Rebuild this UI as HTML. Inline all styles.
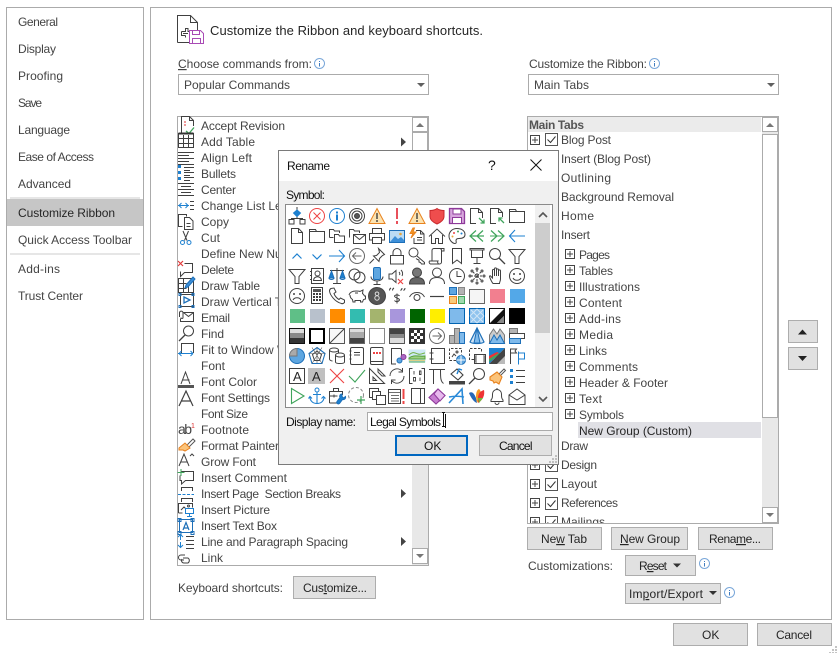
<!DOCTYPE html>
<html><head><meta charset="utf-8"><title>Rename</title>
<style>
html,body{margin:0;padding:0;background:#fff;width:838px;height:653px;overflow:hidden}
svg{display:block}
text{font-family:"Liberation Sans",sans-serif;font-size:12px;fill:#444;letter-spacing:0}
.d{fill:#262626}
.k{fill:#111}
.b{fill:#e1e1e1;stroke:#adadad}
.i{fill:none;stroke:#404040}
.u{text-decoration:underline}
</style></head><body>
<svg width="838" height="653" viewBox="0 0 838 653" xmlns="http://www.w3.org/2000/svg">
<defs>
<g id="pb"><rect x=".5" y=".5" width="9" height="9" fill="#fff" stroke="#444"/><path d="M2 5h6M5 2v6" stroke="#444" fill="none"/></g>
<g id="cb"><rect x=".5" y=".5" width="12" height="12" fill="#fff" stroke="#555"/><path d="M2.500 6.500l3 3 5-6" stroke="#333" fill="none"/></g>
<g id="inf"><circle cx="5.500" cy="5.500" r="5" fill="#fff" stroke="#7aa7d9"/><path d="M5.500 3v1M5.500 5v3.500" stroke="#3f7cc0"/></g>
</defs>
<rect width="838" height="653" fill="#fff"/>

<!-- left nav -->
<rect x="6.500" y="7.500" width="137" height="612" fill="#fff" stroke="#ababab"/>
<rect x="10" y="197" width="130" height="2" fill="#e6e6e6"/>
<rect x="7" y="199" width="136" height="27" fill="#c6c6c6"/>
<rect x="10" y="253" width="130" height="2" fill="#e6e6e6"/>
<text x="18" y="26" textLength="40">General</text>
<text x="18" y="53" textLength="38">Display</text>
<text x="18" y="80" textLength="45">Proofing</text>
<text x="18" y="107" textLength="24">Save</text>
<text x="18" y="134" textLength="52">Language</text>
<text x="18" y="161" textLength="76">Ease of Access</text>
<text x="18" y="188" textLength="53">Advanced</text>
<text x="18" y="217" class="d" textLength="97">Customize Ribbon</text>
<text x="18" y="244" textLength="114">Quick Access Toolbar</text>
<text x="18" y="273" textLength="42">Add-ins</text>
<text x="18" y="300" textLength="65">Trust Center</text>

<!-- main panel -->
<rect x="150.500" y="7.500" width="681" height="612" fill="#fff" stroke="#ababab"/>
<g fill="none" stroke="#404040">
<path d="M177.500 42.500V15.500H190.500L197.500 22.500V30M190.500 15.500V22.500H197.500M177.500 42.500H189"/>
<path d="M181.500 31.500h4v-3h3M181.500 31.500v4h4M183 33.500h5M188 28.500v3h2M185.500 35.500v2"/>
</g>
<path d="M189.500 30.500h11l3 3v10h-14zM192.500 30.500v4h7v-4M192.500 43.500v-5h8v5" fill="#fff" stroke="#a94bb5"/>
<text x="210" y="35" style="font-size:13px" class="d" textLength="273">Customize the Ribbon and keyboard shortcuts.</text>

<text x="178" y="68" textLength="134"><tspan class="u">C</tspan>hoose commands from:</text>
<use href="#inf" x="314" y="58"/>
<rect x="178.500" y="74.500" width="250" height="20" fill="#fff" stroke="#ababab"/>
<text x="184" y="89" textLength="106">Popular Commands</text>
<path d="M417 83h8l-4 4z" fill="#606060"/>

<text x="529" y="68" textLength="118">Customize the Ribbon:</text>
<use href="#inf" x="649" y="58"/>
<rect x="528.500" y="74.500" width="250" height="20" fill="#fff" stroke="#ababab"/>
<text x="534" y="89" textLength="55">Main Tabs</text>
<path d="M767 83h8l-4 4z" fill="#606060"/>

<!-- commands list -->
<rect x="177.500" y="116.500" width="251" height="449" fill="#fff" stroke="#ababab"/>
<rect x="412" y="117" width="16" height="448" fill="#e8e8e8"/>
<rect x="412.500" y="132.500" width="15" height="320" fill="#fff" stroke="#ababab"/>
<rect x="412.500" y="117.500" width="15" height="14" fill="#fff" stroke="#ababab"/>
<path d="M416 127h8l-4-4z" fill="#777"/>
<rect x="412.500" y="548.500" width="15" height="15" fill="#fff" stroke="#ababab"/>
<path d="M416 554h8l-4 4z" fill="#777"/>
<g>
<text x="201" y="130" textLength="84">Accept Revision</text>
<text x="201" y="146" textLength="54">Add Table</text>
<text x="201" y="162" textLength="51">Align Left</text>
<text x="201" y="178" textLength="35">Bullets</text>
<text x="201" y="194" textLength="35">Center</text>
<text x="201" y="210">Change List Level</text>
<text x="201" y="226" textLength="28">Copy</text>
<text x="201" y="242" textLength="19">Cut</text>
<text x="201" y="258">Define New Number</text>
<text x="201" y="274" textLength="33">Delete</text>
<text x="201" y="290" textLength="59">Draw Table</text>
<text x="201" y="306">Draw Vertical Text</text>
<text x="201" y="322" textLength="29">Email</text>
<text x="201" y="338" textLength="23">Find</text>
<text x="201" y="354">Fit to Window Width</text>
<text x="201" y="370" textLength="24">Font</text>
<text x="201" y="386" textLength="56">Font Color</text>
<text x="201" y="402" textLength="69">Font Settings</text>
<text x="201" y="418" textLength="47">Font Size</text>
<text x="201" y="434" textLength="48">Footnote</text>
<text x="201" y="450" textLength="78">Format Painter</text>
<text x="201" y="466" textLength="55">Grow Font</text>
<text x="201" y="482" textLength="86">Insert Comment</text>
<text x="201" y="498" textLength="140" style="white-space:pre">Insert Page  Section Breaks</text>
<text x="201" y="514" textLength="69">Insert Picture</text>
<text x="201" y="530" textLength="76">Insert Text Box</text>
<text x="201" y="546" textLength="147">Line and Paragraph Spacing</text>
<text x="201" y="562" textLength="22">Link</text>
</g>
<path d="M401 137.500l5 4.500-5 4.500zM401 489l5 4.500-5 4.500zM401 537l5 4.500-5 4.500z" fill="#444"/>
<!-- command icons -->
<g fill="none" stroke="#404040">
<path d="M181.500 133V116.500h8l4 4V126M189.500 116.500v4h4"/>
<path d="M184 122h2M184 125h2" stroke="#d33"/>
<path d="M186 131l3 2.500 5-6" stroke="#3fa45b" stroke-width="1.300"/>
<g transform="translate(0 -2)"><rect x="178.500" y="135.500" width="15" height="14"/><path d="M178.500 135.500h15" stroke="#333" stroke-width="2"/>
<path d="M178.500 140.500h15M178.500 145.500h15M183.500 137v12M188.500 137v12"/></g>
<path d="M178 152.500h16M178 155.500h11M178 158.500h16M178 161.500h11M178 164.500h16"/>
<path d="M184 167.500h10M184 172.500h10M184 177.500h10M184 170.500h6M184 175.500h6M184 180.500h6"/>
<path d="M178 183.500h16M181 186.500h10M178 189.500h16M181 192.500h10M178 195.500h16"/>
<path d="M178 205.500h11M179 205.500l2.500-2.500M179 205.500l2.500 2.500M188 205.500l-2.500-2.500M188 205.500l-2.500 2.500" stroke="#1d80d0"/>
<path d="M190 201.500h4M190 205.500h4M190 209.500h4"/>
<path d="M182.500 226.500h-4V214.500h8v2M184.500 217.500h5l3.500 3.500v8.500h-8.500zM186.500 223.500h4M186.500 226.500h4"/>
<path d="M183 231l4 9.500M188.500 231l-4 9.500"/>
<circle cx="182.500" cy="242.500" r="2" stroke="#1d80d0"/><circle cx="189" cy="242.500" r="2" stroke="#1d80d0"/>
<path d="M178 261l5 5M183 261l-5 5" stroke="#e23a3a" stroke-width="1.200"/>
<path d="M184.500 263.500h8v9h-8l-4 4v-5"/>
<g transform="translate(0 -4)"><rect x="178.500" y="282.500" width="15" height="14"/><path d="M178.500 287.500h8M178.500 292.500h8M183.500 283v13M188.500 290v6"/>
<path d="M186 289l7-8 2 2-7 8-3 1z" fill="#3d8fd8" stroke="#1d6fb8"/></g>
<g transform="translate(0 -5)"><rect x="180.500" y="299.500" width="13" height="12"/><path d="M184 302l6 3-6 3z" stroke="#1d6fb8" stroke-width="1.300"/>
<path d="M179 298.500h2v2h-2zM192 298.500h2v2h-2zM179 310.500h2v2h-2zM192 310.500h2v2h-2z" stroke="#1d6fb8"/></g>
<g transform="translate(0 -5)"><path d="M183.500 317.500h10v9h-13v-3M183.500 317.500l5 4 5-4"/>
<path d="M179.500 322v-4.500a1.800 1.800 0 0 1 3.500 0v5a1 1 0 0 1-2 0"/></g>
<circle cx="188.500" cy="331" r="5"/><path d="M185 335l-6 6" stroke-width="1.300"/>
<path d="M181.500 353v-9.500h12V353"/>
<path d="M178 351.500h15M179 351.500l2.500-2.500M179 351.500l2.500 2.500M193 351.500l-2.500-2.500M193 351.500l-2.500 2.500" stroke="#1d80d0" transform="translate(0 2)"/>
<path d="M181 384l4.500-12 4.500 12M182.500 380h7"/>
<rect x="178" y="385" width="16" height="3" fill="#555" stroke="none"/>
<path d="M179 406l7-15 7 15M181.500 401h9" stroke-width="1.200"/>
<path d="M186 449l2-5 5-5 2 2-5 5z" stroke="#555"/>
<path d="M179 449l6-5 5 5-5 3-2-1-4 0z" fill="#fbc37a" stroke="#e8821e" transform="translate(0 -1)"/>
<g transform="translate(0 -2)"><path d="M179 468l5-12 5 12M180.500 464h7M190 458l2-2 2 2" stroke="#404040"/></g>
<path d="M181.500 471.500h12v9h-8l-4 3.500v-3.500h-1.500v-5"/>
<path d="M181 469v7M177.500 472.500h7" stroke="#3fa45b"/>
<path d="M181.500 491v-3.500h11v3.500M181.500 502v-3.500h11v3.500"/>
<path d="M178 494.500h16" stroke="#1d80d0" stroke-dasharray="3 1.500"/>
<path d="M178.500 513v-9.500h14v4M178.500 513h4M181 510l3-3 2 2"/><circle cx="188.500" cy="506" r="1"/>
<rect x="185.500" y="508.500" width="8" height="5" stroke="#1d80d0"/><path d="M189.500 514v2M187 516.500h5" stroke="#1d80d0"/>
<rect x="179.500" y="519.500" width="13" height="13" stroke="#1d6fb8"/>
<path d="M183 530l3-7.500 3 7.500M184 528h4" stroke="#1d6fb8" stroke-width="1.200"/>
<path d="M178 518.500h3v3h-3zM191 518.500h3v3h-3zM178 531.500h3v3h-3zM191 531.500h3v3h-3z" stroke="#1d6fb8"/>
<path d="M181 536v5M178.500 538l2.500-2.500 2.500 2.500M181 543v5M178.500 546l2.500 2.500 2.500-2.500" stroke="#1d80d0" transform="translate(-.5 -1)"/>
<path d="M186 536.500h8M186 540.500h8M186 544.500h8M186 548.500h8"/>
<path d="M185 555h-4a2.500 2.500 0 0 0 0 5h3M183 558h5a3 3 0 0 1 0 5h-4a2.500 2.500 0 0 1-2-4"/>
</g>
<g fill="#1d80d0"><rect x="178" y="165" width="3" height="3"/><rect x="178" y="171" width="3" height="3"/><rect x="178" y="177" width="3" height="3"/></g>
<text x="178" y="434" style="font-size:14px" textLength="14">ab</text>
<text x="191" y="428" style="font-size:7px;fill:#d33">1</text>

<text x="178" y="592" textLength="105">Keyboard shortcuts:</text>
<rect x="293.500" y="576.500" width="82" height="22" class="b"/>
<text x="303" y="592" class="d" textLength="64">Cus<tspan class="u">t</tspan>omize...</text>

<!-- right list -->
<rect x="527.500" y="116.500" width="251" height="407" fill="#fff" stroke="#ababab"/>
<rect x="528" y="117" width="233" height="15" fill="#ebebeb"/>
<text x="529" y="129" style="font-weight:bold;fill:#555" textLength="55">Main Tabs</text>
<rect x="762" y="117" width="16" height="406" fill="#e8e8e8"/>
<rect x="762.500" y="117.500" width="15" height="14" fill="#fff" stroke="#ababab"/>
<path d="M766 127h8l-4-4z" fill="#777"/>
<rect x="762.500" y="134.500" width="15" height="283" fill="#fff" stroke="#ababab"/>
<rect x="762.500" y="507.500" width="15" height="15" fill="#fff" stroke="#ababab"/>
<path d="M766 513h8l-4 4z" fill="#777"/>
<rect x="578" y="422" width="183" height="16" fill="#e0e0e5"/>
<text x="561" y="144" textLength="50">Blog Post</text>
<text x="561" y="163" textLength="90">Insert (Blog Post)</text>
<text x="561" y="182" textLength="50">Outlining</text>
<text x="561" y="201" textLength="113">Background Removal</text>
<text x="561" y="220" textLength="33">Home</text>
<text x="561" y="239" textLength="29">Insert</text>
<text x="579" y="259" textLength="31">Pages</text>
<text x="579" y="275" textLength="34">Tables</text>
<text x="579" y="291" textLength="61">Illustrations</text>
<text x="579" y="307" textLength="43">Content</text>
<text x="579" y="323" textLength="42">Add-ins</text>
<text x="579" y="339" textLength="34">Media</text>
<text x="579" y="355" textLength="28">Links</text>
<text x="579" y="371" textLength="59">Comments</text>
<text x="579" y="387" textLength="89">Header &amp; Footer</text>
<text x="579" y="403" textLength="23">Text</text>
<text x="579" y="419" textLength="45">Symbols</text>
<text x="579" y="435" class="d" textLength="113">New Group (Custom)</text>
<text x="561" y="450" textLength="27">Draw</text>
<text x="561" y="469" textLength="36">Design</text>
<text x="561" y="488" textLength="36">Layout</text>
<text x="561" y="507" textLength="57">References</text>
<svg x="528" y="510" width="233" height="13" viewBox="528 510 233 13" overflow="hidden"><text x="561" y="526">Mailings</text>
<use href="#pb" x="530" y="517"/><use href="#cb" x="545" y="516"/></svg>
<use href="#pb" x="530" y="135"/><use href="#cb" x="545" y="133"/>
<use href="#pb" x="530" y="460"/><use href="#cb" x="545" y="459"/>
<use href="#pb" x="530" y="479"/><use href="#cb" x="545" y="478"/>
<use href="#pb" x="530" y="498"/><use href="#cb" x="545" y="497"/>
<use href="#pb" x="565" y="249"/><use href="#pb" x="565" y="265"/><use href="#pb" x="565" y="281"/><use href="#pb" x="565" y="297"/>
<use href="#pb" x="565" y="313"/><use href="#pb" x="565" y="329"/><use href="#pb" x="565" y="345"/><use href="#pb" x="565" y="361"/>
<use href="#pb" x="565" y="377"/><use href="#pb" x="565" y="393"/><use href="#pb" x="565" y="409"/>

<!-- right side buttons -->
<rect x="527.500" y="527.500" width="74" height="22" class="b"/><text x="541" y="543" class="d" textLength="46">Ne<tspan class="u">w</tspan> Tab</text>
<rect x="611.500" y="527.500" width="76" height="22" class="b"/><text x="620" y="543" class="d" textLength="60"><tspan class="u">N</tspan>ew Group</text>
<rect x="698.500" y="527.500" width="74" height="22" class="b"/><text x="709" y="543" class="d" textLength="52">Rena<tspan class="u">m</tspan>e...</text>
<text x="528" y="570" textLength="85">Customizations:</text>
<rect x="625.500" y="555.500" width="70" height="20" class="b"/><text x="639" y="570" class="d" textLength="28">R<tspan class="u">e</tspan>set</text>
<path d="M673 563.500h8l-4 4z" fill="#333"/>
<use href="#inf" x="699" y="558"/>
<rect x="625.500" y="583.500" width="95" height="20" class="b"/><text x="629" y="598" class="d" textLength="74">Im<tspan class="u">p</tspan>ort/Export</text>
<path d="M709 591h8l-4 4z" fill="#333"/>
<use href="#inf" x="724" y="587"/>
<rect x="788.500" y="320.500" width="29" height="22" class="b"/><path d="M798 334.500h9l-4.500-5z" fill="#222"/>
<rect x="788.500" y="347.500" width="29" height="22" class="b"/><path d="M798 356h9l-4.500 5z" fill="#222"/>
<rect x="673.500" y="623.500" width="74" height="22" class="b"/><text x="702" y="639" class="d">OK</text>
<rect x="757.500" y="623.500" width="74" height="22" class="b"/><text x="776" y="639" class="d" textLength="36">Cancel</text>
<path d="M835 646h2v2h-2zM832 649h2v2h-2zM835 649h2v2h-2zM829 652h2v1h-2zM832 652h2v1h-2zM835 652h2v1h-2z" fill="#c4c4c4"/>

<!-- Dialog -->
<rect x="278.500" y="150.500" width="280" height="314" fill="#f0f0f0" stroke="#7a7a7a"/>
<rect x="279" y="151" width="279" height="30" fill="#fff"/>
<text x="287" y="170" class="k" textLength="43">Rename</text>
<text x="488" y="170" class="k" style="font-size:14px">?</text>
<path d="M530.500 159.500l11 11M541.500 159.500l-11 11" stroke="#111" fill="none"/>
<text x="286" y="199" class="k" textLength="39">Symbol:</text>
<rect x="285.500" y="204.500" width="267" height="203" fill="#fff" stroke="#8a8a8a"/>
<rect x="535" y="205" width="15" height="202" fill="#f0f0f0"/>
<rect x="535" y="223" width="15" height="110" fill="#cdcdcd"/>
<path d="M539 217l4-4 4 4M539 397l4 4 4-4" fill="none" stroke="#555" stroke-width="1.600"/>

<!-- symbols -->
<g fill="none" stroke="#404040">
<!-- row 0 -->
<g transform="translate(288,207)"><path d="M9 0v4M9 9v2.500M3.500 12.500V11.500h11v1"/><rect x="1" y="12.500" width="5" height="4.500"/><rect x="12" y="12.500" width="5" height="4.500"/><path d="M9 3l3.500 3L9 9.500 5.500 6z" fill="#1d80d0" stroke="#1d80d0"/></g>
<g transform="translate(308,207)"><circle cx="9" cy="9" r="7.500" stroke="#e44"/><path d="M5.500 5.500l7 7M12.500 5.500l-7 7" stroke="#e44"/></g>
<g transform="translate(328,207)"><circle cx="9" cy="9" r="7.500" stroke="#1d80d0"/><path d="M9 4.500v2M9 7.500v6" stroke="#1d80d0" stroke-width="2"/></g>
<g transform="translate(348,207)"><circle cx="9" cy="9" r="7.500"/><circle cx="9" cy="9" r="5"/><circle cx="9" cy="9" r="2.500" fill="#555"/></g>
<g transform="translate(368,207)"><path d="M9 1.500l8 15H1z" fill="#fce3b0" stroke="#e8821e"/><path d="M9 6v6M9 13v2" stroke="#333" stroke-width="1.300"/></g>
<g transform="translate(388,207)"><path d="M9 1v11M9 14v3" stroke="#e8505b" stroke-width="2"/></g>
<g transform="translate(408,207)"><path d="M9 1.500l8 15H1z" fill="#fce3b0" stroke="#e8821e"/><path d="M9 6v6M9 13v2" stroke="#333" stroke-width="1.300"/></g>
<g transform="translate(428,207)"><path d="M9 1.500c2 1.500 4 2 7 2v6c0 3-3 6-7 7.500C5 15.500 2 12.500 2 9.500v-6c3 0 5-.5 7-2z" fill="#ef4d4d" stroke="#c8282c"/></g>
<g transform="translate(448,207)"><path d="M1.500 1.500h12l3 3v12h-15z" fill="#d7a6dd" stroke="#8e3a9a" stroke-width="1.300"/><rect x="5" y="2" width="8" height="5" fill="#fff" stroke="#8e3a9a"/><rect x="4.500" y="10.500" width="9" height="6" fill="#fff" stroke="#8e3a9a"/></g>
<g transform="translate(468,207)"><path d="M8 16.500H2.500V1.500h8l4 4V11M10.500 1.500v4h4"/><path d="M11 11l5 5M16 12.500V16h-3.500" stroke="#3fa45b" stroke-width="1.300"/></g>
<g transform="translate(488,207)"><path d="M8 16.500H2.500V1.500h8l4 4V10M10.500 1.500v4h4"/><path d="M16 16l-5-5M11 14.500V11h3.500" stroke="#3fa45b" stroke-width="1.300"/></g>
<g transform="translate(508,207)"><path d="M1.500 15.500V2.500h6l1 2h8v11z M1.500 4.500h7"/></g>
<!-- row 1 -->
<g transform="translate(288,227)"><path d="M3.500 16.500V1.500h7l4 4v11zM10.500 1.500v4h4"/></g>
<g transform="translate(308,227)"><path d="M1.500 15.500V2.500h6l1 2h8v11zM1.500 4.500h7"/></g>
<g transform="translate(328,227)"><path d="M1.500 10.500v-8h4l1 1.500h5v2M6.500 15.500v-8h4l1 1.500h5v6.500z"/><path d="M1.500 10.500h4"/></g>
<g transform="translate(348,227)"><path d="M1.500 10.500v-8h4l1 1.500h5v2"/><path d="M5.500 16.500v-9h12v9zM5.500 7.500l6 5 6-5"/></g>
<g transform="translate(368,227)"><path d="M4.500 6V1.500h9V6M4.500 13H1.500V6.500h15V13h-3M4.500 10.500h9v6h-9z"/></g>
<g transform="translate(388,227)"><rect x="1.500" y="3.500" width="15" height="12" fill="#bcdcf4" stroke="#1d6fb8"/><path d="M2 15l5-6 3 3 3-2 3 3v2z" fill="#3d8fd8" stroke="none"/><circle cx="12.500" cy="7" r="1.300" fill="#e8a53b" stroke="none"/></g>
<g transform="translate(408,227)"><path d="M8 3.500h4.500l3.500 3.500v9.500H6V11M12.500 3.500V7H16M9 10.500h5M9 13h5"/><path d="M5 1L2 6.500h3L3 11l5-6H5l1.500-4z" fill="#f59a23" stroke="#e8821e"/></g>
<g transform="translate(428,227)"><path d="M1 9.500L9 2l8 7.500M3.500 8v8.500h4v-5h3v5h4V8"/></g>
<g transform="translate(448,227)"><path d="M9 1.500c-5 0-8 3.500-8 7.500s3.500 7.500 6 7.500c2 0 1-2 1-3 0-1.500 1-2 3-2 3 0 6-1 6-4 0-4-4-6-8-6z"/><circle cx="6" cy="6" r="1" fill="#e44" stroke="none"/><circle cx="10" cy="4.500" r="1" fill="#3fa45b" stroke="none"/><circle cx="13.500" cy="6.500" r="1" fill="#1d80d0" stroke="none"/><circle cx="4.500" cy="9.500" r="1" fill="#e8a53b" stroke="none"/></g>
<g transform="translate(468,227)"><path d="M8 3.500L2 9l6 5.500M15 3.500L9 9l6 5.500M2 9h14" stroke="#3fa45b" stroke-width="1.200"/></g>
<g transform="translate(488,227)"><path d="M2 9h14" stroke="#3fa45b"/><path d="M3 3.500L9 9l-6 5.500M10 3.500L16 9l-6 5.500" stroke="#3fa45b" stroke-width="1.200"/></g>
<g transform="translate(508,227)"><path d="M1 9h16M7 3L1.500 9 7 15" stroke="#1d80d0" stroke-width="1.100"/></g>
<!-- row 2 -->
<g transform="translate(288,247)"><path d="M4.500 11.500L9 7l4.500 4.500" stroke="#1d80d0" stroke-width="1.200"/></g>
<g transform="translate(308,247)"><path d="M4.500 7.500L9 12l4.500-4.500" stroke="#1d80d0" stroke-width="1.200"/></g>
<g transform="translate(328,247)"><path d="M1 9h16M11 3l5.500 6L11 15" stroke="#1d80d0" stroke-width="1.100"/></g>
<g transform="translate(348,247)"><circle cx="9" cy="9" r="7.500" stroke="#666"/><path d="M13.500 9h-9M8 5.500L4.500 9 8 12.500" stroke="#666"/></g>
<g transform="translate(368,247)"><path d="M10.500 1.500l6 6-2 1-3 3-.5 3-5.500-5.500 3-.5 3-3zM6 12l-4.500 4.500"/></g>
<g transform="translate(388,247)"><rect x="2.500" y="8.500" width="13" height="8.500"/><path d="M5 8.500V5.500a4 4 0 0 1 8 0v3"/></g>
<g transform="translate(408,247)"><circle cx="5.500" cy="5.500" r="4.500"/><path d="M9 9l7.500 6.500v1.500h-3l-1-1.500-1.500-.5v-2l-1.500-.5-1.500-1"/></g>
<g transform="translate(428,247)"><path d="M4 14V3.500A2 2 0 0 1 6 1.500h10v2.500h-2.500v11a2 2 0 0 1-2 2H2.500a2 2 0 0 1-1-3h8.500a2 2 0 0 0 1 3M13.500 4V3.500A2 2 0 0 0 12 1.500"/></g>
<g transform="translate(448,247)"><path d="M4.500 16.500v-15h9v15L9 13z"/></g>
<g transform="translate(468,247)"><path d="M2 1.500h14v1.500H2zM3.500 3v7.500h11V3M9 10.500V16M5.500 16.500h7"/></g>
<g transform="translate(488,247)"><circle cx="7" cy="7" r="5.500"/><path d="M11 11l6 6" stroke-width="1.300"/></g>
<g transform="translate(508,247)"><path d="M1 2.500h16L11 9.500v7H7v-7z"/></g>
<!-- row 3 -->
<g transform="translate(288,267)"><path d="M1 2.500h16L11 9.500v7H7v-7z"/></g>
<g transform="translate(308,267)"><rect x="3.500" y="1.500" width="12" height="15"/><circle cx="9.500" cy="6.500" r="2.500"/><path d="M5.500 13.500c0-5 8-5 8 0zM2 4.500h2M2 8.500h2M2 12.500h2"/></g>
<g transform="translate(328,267)"><path d="M9 1v15M5 16.500h8M2 3.500h14"/><path d="M3.500 4L1 11h5zM14.500 4L12 11h5z" fill="#1d80d0" stroke="#1d6fb8"/><path d="M1 11c.5 2 4.500 2 5 0M12 11c.5 2 4.500 2 5 0" stroke="#1d6fb8"/></g>
<g transform="translate(348,267)"><circle cx="6.500" cy="7.500" r="5.500"/><circle cx="11.500" cy="10.500" r="5.500"/></g>
<g transform="translate(368,267)"><rect x="5.500" y=".5" width="7" height="12" rx="1.500" fill="#5ea6e0" stroke="#1d6fb8"/><path d="M3 9.500c0 6 12 6 12 0M9 14v3M5.500 17.500h7"/></g>
<g transform="translate(388,267)"><path d="M8 3.500v12l-4-3.500H1V7h3zM11 5c1 1 1 2 .5 3M13 3c2 2 2 4 1 6"/><path d="M10 12l5 5M15 12l-5 5" stroke="#e44" stroke-width="1.200"/></g>
<g transform="translate(408,267)"><circle cx="9" cy="5.500" r="4.500" fill="#777"/><path d="M1.500 17c0-5 3-6.500 7.500-6.500s7.500 1.500 7.500 6.500z" fill="#666"/></g>
<g transform="translate(428,267)"><circle cx="9" cy="5.500" r="4.500"/><path d="M1.500 17c0-5 3-6.500 7.500-6.500s7.500 1.500 7.500 6.500"/></g>
<g transform="translate(448,267)"><circle cx="9" cy="9" r="7.500"/><path d="M9 4v5.500h4.500"/></g>
<g transform="translate(468,267)"><path d="M9 3v12M3 9h12M5 5l8 8M13 5l-8 8" stroke-dasharray="2 1"/><circle cx="9" cy="2" r="1"/><circle cx="9" cy="16" r="1"/><circle cx="2" cy="9" r="1"/><circle cx="16" cy="9" r="1"/><circle cx="4" cy="4" r="1"/><circle cx="14" cy="4" r="1"/><circle cx="4" cy="14" r="1"/><circle cx="14" cy="14" r="1"/></g>
<g transform="translate(488,267)"><path d="M5 16.500c-1-1-3-5-3.500-7 0-1 1-1 1.500 0L4.500 11V3.500c0-1.500 2-1.500 2 0V2c0-1.500 2-1.500 2 0v1c0-1.500 2-1.500 2 0v1c0-1.500 2-1.500 2 0V12c0 2-1 3-1 4.500zM6.500 3.500V9M8.500 3V9M10.500 4V9"/></g>
<g transform="translate(508,267)"><circle cx="9" cy="9" r="7.500"/><circle cx="6" cy="7" r="1" fill="#444" stroke="none"/><circle cx="12" cy="7" r="1" fill="#444" stroke="none"/><path d="M5 11c1.500 3 6.500 3 8 0"/></g>
<!-- row 4 -->
<g transform="translate(288,287)"><circle cx="9" cy="9" r="7.500"/><circle cx="6" cy="7" r="1" fill="#444" stroke="none"/><circle cx="12" cy="7" r="1" fill="#444" stroke="none"/><path d="M5 13c1.500-3 6.500-3 8 0"/></g>
<g transform="translate(308,287)"><rect x="3.500" y=".5" width="11" height="16"/><rect x="5" y="2" width="8" height="3" fill="#555" stroke="none"/><path d="M5 7h2M8 7h2M11 7h2M5 10h2M8 10h2M11 10h2M5 13h2M8 13h2M11 13h2" stroke-width="2"/></g>
<g transform="translate(328,287)"><path d="M3 1.500L6 1l2 4-2 1.500c.5 2 3 5 5 6L12.500 11l4 2v2.500c-1 1-2 1.500-3 1C7 15 2 8 1.500 4c0-1 .5-2 1.500-2.500z"/></g>
<g transform="translate(348,287)"><path d="M1 8c1-3 4-4 7-4 2 0 3 0 4 .5l3-1.500-.5 3.500c1 .5 1.500 1.500 2 2.500h1v3l-2 .5-1 2.500h-2v-1.500H7V15H5l-.5-2.500C3 11.500 2 10 2 8M7 6h3"/></g>
<g transform="translate(368,287)"><circle cx="9" cy="9" r="8.500" fill="#555" stroke="#444"/><circle cx="9" cy="6.800" r="1.800" fill="none" stroke="#ddd"/><circle cx="9" cy="11" r="2.200" fill="none" stroke="#ddd"/></g>
<g transform="translate(388,287)"><path d="M3 1c-1 .5-1.500 1-1.500 2.500M6 1c-1 .5-1.500 1-1.500 2.500M12.500 3.500c1-.5 1.500-1 1.500-2.500M15.500 3.500c1-.5 1.500-1 1.500-2.500"/><path d="M11.500 9c-1-1.500-4-1.500-5 0 0 2 5 2 5 4-1 2-4 2-5 .5M9 6.500v10"/></g>
<g transform="translate(408,287)"><path d="M1.500 10c3-6 12-6 15 0"/><circle cx="9" cy="10.500" r="3"/></g>
<g transform="translate(428,287)"><path d="M2 9.500h14" stroke-width="1.200"/></g>
<g transform="translate(448,287)"><rect x="1.500" y=".5" width="7" height="7" fill="#5ea6e0" stroke="#1d6fb8"/><rect x="10.500" y=".5" width="6" height="7" fill="#b3b3b3" stroke="#888"/><rect x="1.500" y="9.500" width="7" height="7" fill="#f8cb7a" stroke="#e8821e"/><rect x="10.500" y="9.500" width="6" height="7" fill="#9fd9ae" stroke="#3fa45b"/></g>
<g transform="translate(468,287)"><rect x="1.500" y="2.500" width="15" height="14" fill="#f5f5f5" stroke="#666"/></g>
<rect x="490" y="289" width="15" height="14" fill="#f27f8f" stroke="none"/>
<rect x="510" y="289" width="15" height="14" fill="#53a8e8" stroke="none"/>
<!-- row 5 -->
<g stroke="none"><rect x="290" y="309" width="15" height="14" fill="#5fbf87"/><rect x="310" y="309" width="15" height="14" fill="#b8c1cc"/><rect x="330" y="309" width="15" height="14" fill="#ff8c00"/><rect x="350" y="309" width="15" height="14" fill="#33bcb0"/><rect x="370" y="309" width="15" height="14" fill="#a4b46e"/><rect x="390" y="309" width="15" height="14" fill="#a896dc"/><rect x="410" y="309" width="15" height="14" fill="#006400"/><rect x="430" y="309" width="15" height="14" fill="#ffee00"/></g>
<rect x="449.500" y="308.500" width="15" height="15" fill="#7fbaeb" stroke="#0063b1"/>
<rect x="469.500" y="308.500" width="15" height="15" fill="#8fc3ee" stroke="#0063b1"/><path d="M471 310l12 12M483 310l-12 12M477 309l7 7M477 323l7-7M477 309l-7 7M477 323l-7-7" stroke="#cfe4f6"/>
<rect x="489.500" y="308.500" width="15" height="15" fill="#fff" stroke="#111"/><path d="M490 323l14-14v7l-7 7z" fill="#111" stroke="none"/><path d="M497 323l7-7v7z" fill="#888" stroke="none"/>
<rect x="509" y="308" width="16" height="16" fill="#000" stroke="none"/>
<!-- row 6 -->
<g transform="translate(288,327)"><rect x="1" y="1" width="16" height="16" fill="#111" stroke="none"/><rect x="2" y="2" width="14" height="4" fill="#ddd" stroke="none"/><rect x="2" y="6" width="14" height="5" fill="#888" stroke="none"/><rect x="2" y="11" width="14" height="5" fill="#333" stroke="none"/></g>
<g transform="translate(308,327)"><rect x="2" y="2" width="14" height="14" fill="#fff" stroke="#000" stroke-width="2"/></g>
<g transform="translate(328,327)"><rect x="1.500" y="1.500" width="15" height="15" fill="#f8f8f8" stroke="#555"/><path d="M2 16L16 2"/></g>
<g transform="translate(348,327)"><rect x="1.500" y="1.500" width="15" height="15" fill="#aaa" stroke="#666"/><rect x="2" y="2" width="14" height="3" fill="#ddd" stroke="none"/><rect x="2" y="11" width="14" height="5" fill="#444" stroke="none"/></g>
<g transform="translate(368,327)"><rect x="1.500" y="1.500" width="15" height="15" fill="#fff" stroke="#888"/></g>
<g transform="translate(388,327)"><rect x="1.500" y="1.500" width="15" height="15" fill="#ddd" stroke="#555"/><rect x="2" y="2" width="14" height="5" fill="#444" stroke="none"/><rect x="2" y="7" width="14" height="4" fill="#888" stroke="none"/></g>
<g transform="translate(408,327)"><rect x="1" y="1" width="16" height="16" fill="#333" stroke="none"/><path d="M6 3h3v3H6zM12 3h3v3h-3zM3 6h3v3H3zM9 6h3v3H9zM6 9h3v3H6zM12 9h3v3h-3zM3 12h3v3H3zM9 12h3v3H9z" fill="#fff" stroke="none"/></g>
<g transform="translate(428,327)"><circle cx="9" cy="9" r="7.500" stroke="#666"/><path d="M4.500 9h9M10 5.500L13.500 9 10 12.500" stroke="#666"/></g>
<g transform="translate(448,327)"><rect x="1.500" y="8.500" width="5" height="8" fill="#b3b3b3" stroke="#777"/><rect x="6.500" y="1.500" width="5" height="15" fill="#b3b3b3" stroke="#777"/><rect x="11.500" y="5.500" width="5" height="11" fill="#7fbaeb" stroke="#1d6fb8"/></g>
<g transform="translate(468,327)"><path d="M9 1L2 15c2 2 12 2 14 0z" fill="#cfe4f6" stroke="#1d6fb8" stroke-width="1.200"/><path d="M9 1l-3 15h6z" fill="#7fbaeb" stroke="#1d6fb8"/></g>
<g transform="translate(488,327)"><path d="M1.500 16.500V8l4-6 3.500 5 3-5 4.500 6v8.500z" fill="#ccc" stroke="#777"/><path d="M1.500 16.500L6 8l3 5 3-5 4.500 8.500z" fill="#7fbaeb" stroke="#1d6fb8"/></g>
<g transform="translate(508,327)"><rect x="1.500" y="1.500" width="8" height="5" fill="#b3b3b3" stroke="#777"/><rect x="1.500" y="6.500" width="15" height="5" fill="#fff" stroke="#444"/><rect x="1.500" y="11.500" width="11" height="5" fill="#7fbaeb" stroke="#1d6fb8"/></g>
<!-- row 7 -->
<g transform="translate(288,347)"><circle cx="9" cy="9" r="7.500" fill="#5ea6e0" stroke="#1d6fb8"/><path d="M9 9V1.500A7.500 7.500 0 0 0 1.500 9z" fill="#aaa" stroke="#777"/></g>
<g transform="translate(308,347)"><path d="M9 .5l8 6-3 10H4L1 6.500z" stroke="#1d6fb8" stroke-width="1.100"/><path d="M9 4l4.500 3.500-2 6h-5l-2-6z"/><path d="M9 .5V16M1 6.500l16 0M4 16.500L14 .5M14 16.500L4 .5" stroke="#555" stroke-width=".6"/></g>
<g transform="translate(328,347)"><ellipse cx="6" cy="3" rx="4.500" ry="2"/><path d="M1.500 3v9c0 1 1.500 2 3 2M10.500 3v3"/><ellipse cx="12" cy="8" rx="4.500" ry="2" fill="#fff"/><path d="M7.500 8v7c0 2 9 2 9 0V8"/></g>
<g transform="translate(348,347)"><rect x="2.500" y=".5" width="13" height="17" rx="1.500"/><path d="M6 5.500h6M6 8h6M1.500 4h2M1.500 8h2M1.500 12h2"/></g>
<g transform="translate(368,347)"><path d="M4 .5h10a1 1 0 0 1 1 1v16H4a1.500 1.500 0 0 1-1.500-1.500V2A1.500 1.500 0 0 1 4 .5zM2.500 14.500H15"/><path d="M5 6h2M8 6h2M11 6h2" stroke="#e44" stroke-width="2"/></g>
<g transform="translate(388,347)"><path d="M8 17H3.500V1.500h9l1 1v7"/><circle cx="11.500" cy="13.500" r="2.500" fill="#5ea6e0" stroke="#1d6fb8"/><circle cx="15.500" cy="10" r="2.500" fill="#a86bc4" stroke="#8e3a9a"/></g>
<g transform="translate(408,347)"><rect x=".5" y="2.500" width="17" height="13" fill="#cfe9f5" stroke="none"/><path d="M1 8c4-4 6-2 9-1 3 1 5-1 7-1" stroke="#6faf3c"/><path d="M1 11c5-4 10-1 16-2v3H1z" fill="#9fd184" stroke="#55a03a"/><path d="M1 15h16" stroke="#3fa45b"/><path d="M1 13.500h16" stroke="#e0d088"/></g>
<g transform="translate(428,347)"><rect x="3.500" y="1.500" width="13" height="15"/><path d="M1.500 6h4M1.500 12h4"/></g>
<g transform="translate(448,347)"><path d="M8 13.500H1.500v-12h12v6" stroke-dasharray="2.500 1.500"/><path d="M4 10l2-3 2 2"/><circle cx="9" cy="5" r="1"/><circle cx="13" cy="13" r="4.500" fill="#5ea6e0" stroke="#1d6fb8"/><path d="M8.500 13h9M13 8.500v9" stroke="#fff"/></g>
<g transform="translate(468,347)"><path d="M6 12.500H1.500v-11h12v4" stroke-dasharray="2.500 1.500"/><rect x="6.500" y="7.500" width="11" height="9" fill="#fff"/><path d="M8 8v8M16 8v8M6.500 10h2M6.500 12h2M6.500 14h2M15.500 10h2M15.500 12h2M15.500 14h2" stroke-width=".8"/></g>
<g transform="translate(488,347)"><path d="M1 1h16L1 17z" fill="#1d80d0" stroke="none"/><path d="M1 9l8-4 2 1L1 12z" fill="#e33" stroke="none"/><path d="M1 12l10-6 3 0L1 15z" fill="#3fa45b" stroke="none"/><path d="M17 1v16H1z" fill="#444" stroke="none"/><path d="M17 9v8H9z" fill="#bbb" stroke="none"/></g>
<g transform="translate(508,347)"><path d="M2.500 17V1.500M2.500 2h6l-1.500 2 1.500 2h-6"/><path d="M10.500 4.500v13M10.500 6h6v6h-6" stroke="#1d80d0"/></g>
<!-- row 8 -->
<g transform="translate(288,367)"><rect x="1.500" y="1.500" width="15" height="15" fill="#fff"/></g>
<g stroke="none"><rect x="308" y="368" width="17" height="16" fill="#c0c0c0"/></g>
<g transform="translate(328,367)"><path d="M2 2l14 14M16 2L2 16" stroke="#e44" stroke-width="1.100"/></g>
<g transform="translate(348,367)"><path d="M1 9l6 6L17 3" stroke="#3fa45b" stroke-width="1.100"/></g>
<g transform="translate(368,367)"><path d="M1.500 1.500l15 15h-15zM5 10l3.500 3.500H5z"/><path d="M10 2l7 7-3 0-4-4z" stroke="#444"/></g>
<g transform="translate(388,367)"><path d="M2 9a7 7 0 0 1 12-5M16 9a7 7 0 0 1-12 5"/><path d="M14.500 1v4h-4M3.500 17v-4h4"/></g>
<g transform="translate(408,367)"><path d="M4.500 1.500h-3v15h3M13.500 1.500h3v15h-3"/><path d="M6 4v3.500M11.500 4h1.500v3.500h-1.500zM5.500 10.500h2v3.500h-2zM12 10.500V14" stroke-width=".9"/></g>
<g transform="translate(428,367)"><path d="M1 2.500h16M5.500 2.500V17M12.500 2.500c0 8 0 12 3 14"/></g>
<g transform="translate(448,367)"><path d="M3 7l6-5 6 6-5 5z" stroke-width="1.100"/><path d="M9 7l2-5 3 1" stroke="#1d80d0" stroke-width="1.400"/><rect x="1" y="14" width="16" height="3.500" fill="#444" stroke="none"/></g>
<g transform="translate(468,367)"><circle cx="11" cy="7" r="5.500"/><path d="M7 11l-6 6" stroke-width="1.300"/></g>
<g transform="translate(488,367)"><path d="M11 7l5-5 1.500 1.500-5 5" stroke="#555"/><path d="M2 10l7-5 5 5-3 7-3-2-2 1-1-2-3-1z" fill="#fbc37a" stroke="#e8821e" stroke-width="1.100"/></g>
<g transform="translate(508,367)"><path d="M2 2h3v3H2zM2 8h3v3H2zM2 14h3v3H2z" fill="#1d80d0" stroke="none"/><path d="M8 3.500h9M8 9.500h9M8 15.500h9"/></g>
<!-- row 9 -->
<g transform="translate(288,387)"><path d="M3.500 1.500L16 9 3.500 16.500z" stroke="#3fa45b" stroke-width="1.100"/></g>
<g transform="translate(308,387)"><circle cx="9" cy="3" r="2" stroke="#1d80d0"/><path d="M9 5v12M5 7.500h8M2 10c0 4 3 6.500 7 6.500s7-2.500 7-6.500M.5 11.500L2 9.500l2 2M13.500 11.500l2-2 2 2" stroke="#1d80d0" stroke-width="1.100"/></g>
<g transform="translate(328,387)"><path d="M1.500 16V4.500h13V8M5.500 4.500v-3h5v3M1.500 9h8M1.500 16h8M6 7.500v3"/><path d="M14 7c-2 0-3 2-2 3.500l-3 4c-1 2 1 3 2.500 2l3-4c2 .5 3.500-1 3-3l-2 1.500-1.500-1.500z" fill="#1d80d0" stroke="#1d6fb8"/></g>
<g transform="translate(348,387)"><circle cx="8" cy="8" r="7.500" stroke="#888" stroke-dasharray="3 2"/><path d="M13 9v8M9 13h8" stroke="#3fa45b" stroke-width="1.200"/></g>
<g transform="translate(368,387)"><rect x="1.500" y="1.500" width="9" height="9"/><rect x="4.500" y="4.500" width="8" height="8" fill="#fff"/><rect x="8.500" y="8.500" width="9" height="9" fill="#fff"/></g>
<g transform="translate(388,387)"><rect x=".5" y="2.500" width="12" height="14"/><path d="M1 5.500h12M3 8.500h8M3 11.500h8M3 14h8" stroke-width=".8"/><path d="M15.500 2v10M15.500 14v3" stroke="#e44" stroke-width="2"/></g>
<g transform="translate(408,387)"><rect x="3.500" y="1.500" width="13" height="15"/><path d="M12.500 2v15"/></g>
<g transform="translate(428,387)"><path d="M10 2l7 6.500-9 8.500-7-6.500z" fill="#c77dd1" stroke="#8e3a9a" stroke-width="1.100"/><path d="M6 7l6 7 5-5.500-7-6.500z" fill="#e8b9ee" stroke="#8e3a9a"/></g>
<g transform="translate(448,387)"><path d="M1 16L14 2l1 15M1 10c5-1 10-1 15 0" stroke="#2a8ad8" stroke-width="1.600"/></g>
<g transform="translate(468,387)"><path d="M1 6c3-2 5 0 7 5l1 5C6 15 3 11 1 6z" fill="#2468b8" stroke="none"/><path d="M8 10c0-5 1-7 3-8 3 2 2 8-2 14z" fill="#f59a23" stroke="none"/><path d="M10 10c1-5 3-6 6-7 1 5-1 10-6 13z" fill="#e33" stroke="none"/><path d="M10 11l5 0-4 5z" fill="#6fb83c" stroke="none"/></g>
<g transform="translate(488,387)"><path d="M3 13c1.500-1.500 1.500-3 1.500-6a4.500 4.500 0 0 1 9 0c0 3 0 4.500 1.500 6v1.500H3zM9 1v1.500M7 15.500a2 2 0 0 0 4 0"/></g>
<g transform="translate(508,387)"><path d="M1 8L9 2l8 6v9.500H1zM1 8l8 5 8-5"/></g>
</g>
<g>
<text x="293" y="381" class="d" style="font-size:13px">A</text>
<text x="312" y="381" class="d" style="font-size:13px">A</text>
</g>

<!-- display name -->
<text x="286" y="426" class="k" textLength="70">Display name:</text>
<rect x="367.500" y="412.500" width="185" height="18" fill="#fff" stroke="#ababab"/>
<text x="370" y="426" class="k" textLength="71">Legal Symbols</text>
<path d="M442 412.500h3M442 426.500h3M443.500 413v13" stroke="#111" fill="none"/><path d="M445.500 414v14" stroke="#111" fill="none"/>
<rect x="396" y="436" width="71" height="19" fill="#e1e1e1" stroke="#0067c0" stroke-width="2"/>
<text x="424" y="450" class="k">OK</text>
<rect x="479.500" y="435.500" width="72" height="20" class="b"/>
<text x="499" y="450" class="k" textLength="33.500">Cancel</text>
<path d="M555 455h2v2h-2zM552 458h2v2h-2zM555 458h2v2h-2zM549 461h2v2h-2zM552 461h2v2h-2zM555 461h2v2h-2z" fill="#bfbfbf"/>
</svg>
</body></html>
